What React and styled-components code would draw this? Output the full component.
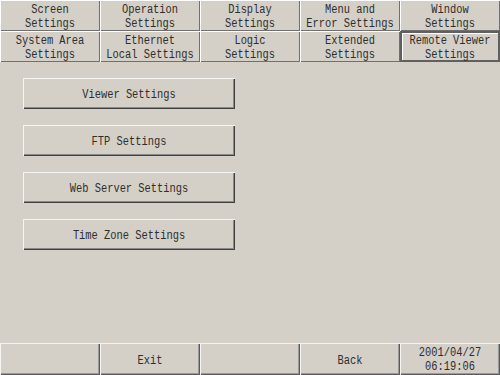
import React from "react";
import styled, { createGlobalStyle, css } from "styled-components";

const Global = createGlobalStyle`
  html, body { margin: 0; padding: 0; background: #d4d0c8; }
  #root { width: 500px; height: 375px; }
`;

const Page = styled.div`
  width: 500px;
  height: 375px;
  display: flex;
  flex-direction: column;
  background: #d4d0c8;
  font-family: "Liberation Mono", "DejaVu Sans Mono", monospace;
  color: #2e2e2e;
  overflow: hidden;
`;

const TabGrid = styled.div`
  display: grid;
  grid-template-columns: repeat(5, 100px);
  grid-template-rows: repeat(2, 31px);
`;

const Label = styled.span`
  display: inline-block;
  font-size: 10.4px;
  line-height: 11px;
  transform: translateY(1px) scaleY(1.2);
  white-space: pre;
  text-align: center;
`;

const Tab = styled.div`
  display: flex;
  align-items: center;
  justify-content: center;
  box-sizing: border-box;
  background: #d4d0c8;
  box-shadow: inset 1px 1px 0 #ffffff, inset -1px -1px 0 #707070;
  ${(p) =>
    p.$active &&
    css`
      box-shadow: inset 2px 2px 0 #606060, inset -2px -2px 0 #606060,
        inset 3px 3px 0 #ffffff;
    `}
`;

const Content = styled.div`
  flex: 1;
  display: flex;
  flex-direction: column;
  gap: 16px;
  padding: 16px 0 0 23px;
`;

const MenuButton = styled.div`
  width: 212px;
  height: 31px;
  box-sizing: border-box;
  display: flex;
  align-items: center;
  justify-content: center;
  background: #d4d0c8;
  box-shadow: inset 1px 1px 0 #f4f4f0, inset -1px -1px 0 #404040,
    inset -2px -2px 0 #8a8a8a;
`;

const Footer = styled.div`
  display: grid;
  grid-template-columns: repeat(5, 100px);
  height: 32px;
`;

const FooterCell = styled.div`
  display: flex;
  align-items: center;
  justify-content: center;
  box-sizing: border-box;
  background: #d4d0c8;
  box-shadow: inset 1px 1px 0 #f4f4f0, inset -1px -1px 0 #5a5a5a,
    inset -2px -2px 0 #9a9a9a;
`;

const tabs = [
  "Screen\nSettings",
  "Operation\nSettings",
  "Display\nSettings",
  "Menu and\nError Settings",
  "Window\nSettings",
  "System Area\nSettings",
  "Ethernet\nLocal Settings",
  "Logic\nSettings",
  "Extended\nSettings",
  "Remote Viewer\nSettings",
];

const menu = [
  "Viewer Settings",
  "FTP Settings",
  "Web Server Settings",
  "Time Zone Settings",
];

const footer = ["", "Exit", "", "Back", "2001/04/27\n06:19:06"];

export default function App() {
  return (
    <Page>
      <Global />
      <TabGrid>
        {tabs.map((t, i) => (
          <Tab key={i} $active={i === 9}>
            <Label>{t}</Label>
          </Tab>
        ))}
      </TabGrid>
      <Content>
        {menu.map((m) => (
          <MenuButton key={m}>
            <Label>{m}</Label>
          </MenuButton>
        ))}
      </Content>
      <Footer>
        {footer.map((f, i) => (
          <FooterCell key={i}>
            <Label>{f}</Label>
          </FooterCell>
        ))}
      </Footer>
    </Page>
  );
}
